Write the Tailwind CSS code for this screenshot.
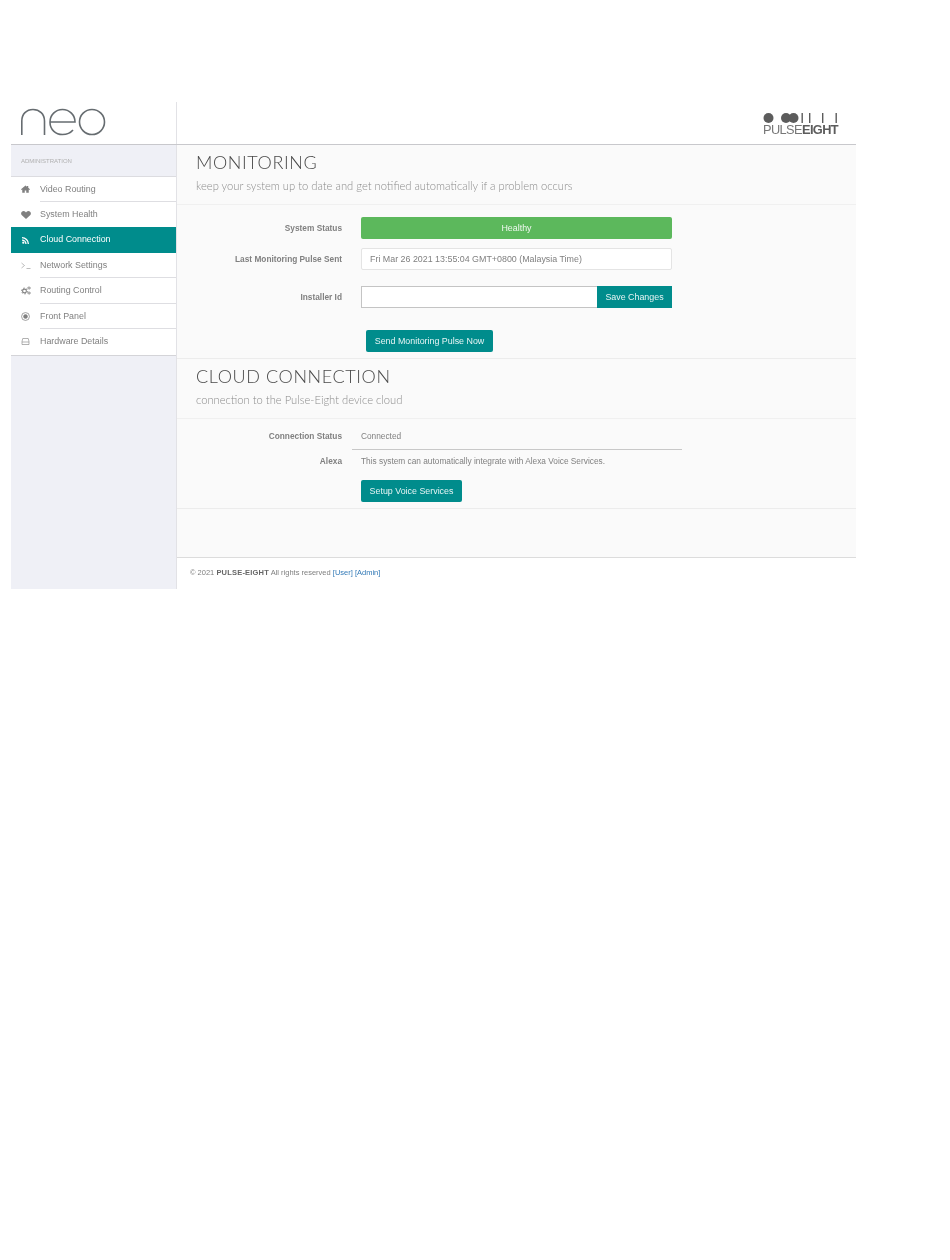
<!DOCTYPE html>
<html lang="en">
<head>
    <meta charset="UTF-8">
    <title>Neo - Cloud Connection</title>
    <script src="https://cdn.jsdelivr.net/npm/@tailwindcss/browser@4"></script>
</head>
<body class="bg-white font-['Liberation_Sans',sans-serif] text-[8.3px] text-[#808080]">
    <div class="ml-[11px] mt-[102px] w-[845px] h-[487px] flex flex-col will-change-transform">
        <!-- top bar -->
        <header class="flex h-[43px] shrink-0 border-b border-[#c8c8cc]">
            <div class="w-[166px] border-r border-[#e2e2e6] pl-[9px] pt-[6px]">
                <svg width="86" height="28" viewBox="0 0 86 28" fill="none" stroke="#666c70" stroke-width="1.6">
                    <path d="M1.800 27V13C1.800 6 6.500 1.500 13 1.500S24.500 6 24.500 13V27"/>
                    <path d="M30 14H55C55 7 49.500 1.500 42.500 1.500S30 7 30 14.200 35.500 26.500 42.500 26.500C47 26.500 50.500 25 53 22"/>
                    <circle cx="72" cy="14" r="12.500"/>
                </svg>
            </div>
            <div class="flex-1 flex justify-end pr-[18px] pt-[10px]">
                <div class="w-[75px] relative">
                    <svg width="75" height="12" viewBox="0 0 75 12" fill="#5c5c5c" class="block">
                        <circle cx="5.500" cy="6" r="5"/><circle cx="23" cy="6" r="5"/><circle cx="30.500" cy="6" r="5"/>
                        <rect x="38.500" y="1" width="1.400" height="10"/><rect x="46" y="1" width="1.400" height="10"/>
                        <rect x="59" y="1" width="1.400" height="10"/><rect x="72.500" y="1" width="1.400" height="10"/>
                    </svg>
                    <div class="text-[12.8px] leading-[11px] tracking-[-0.6px] text-[#777] whitespace-nowrap">PULSE<span class="font-bold text-[#5c5c5c]">EIGHT</span></div>
                </div>
            </div>
        </header>

        <div class="flex flex-1">
            <!-- sidebar -->
            <aside class="w-[166px] shrink-0 bg-[#eff0f6] border-r border-[#e2e2e6]">
                <div class="h-[31.600px] flex items-center pl-[10px] pt-[2px] text-[6px] text-[#b0b0b0] border-b border-[#dcdce0]">ADMINISTRATION</div>
                <nav class="bg-white border-b border-[#d4d4d8] text-[#808080] text-[8.900px]">
                    <a class="h-[25.400px] flex items-center relative">
                        <span class="w-[29px] flex justify-center">
                            <svg width="9" height="8" viewBox="0 0 18 16" fill="#808080"><path d="M9 1 0 8.500 1 10l1.500-1.200V15.500H7.500V11h3v4.500h5V8.800L17 10l1-1.500-3.500-3V2h-2.500v1.400z"/></svg>
                        </span>
                        Video Routing
                        <span class="absolute left-[29px] right-0 bottom-0 h-px bg-[#dedee2]"></span>
                    </a>
                    <a class="h-[25.400px] flex items-center">
                        <span class="w-[29px] flex justify-center">
                            <svg width="10" height="8" viewBox="0 0 16 13" fill="#808080"><path d="M8 13 1.300 7C-.4 5.300-.4 2.800 1.300 1.200S5.500-.2 7 1.400L8 2.500l1-1.100c1.500-1.600 4-1.800 5.700-.2s1.700 4.100 0 5.800z"/></svg>
                        </span>
                        System Health
                    </a>
                    <a class="h-[25.400px] flex items-center bg-[#008c8c] text-white">
                        <span class="w-[29px] flex justify-center">
                            <svg width="7" height="7" viewBox="0 0 16 16" fill="#fff"><circle cx="3" cy="13" r="2.600"/><path d="M0 5.500v3a7.500 7.500 0 0 1 7.500 7.500h3A10.500 10.500 0 0 0 0 5.500z"/><path d="M0 0v3a13 13 0 0 1 13 13h3A16 16 0 0 0 0 0z"/></svg>
                        </span>
                        Cloud Connection
                    </a>
                    <a class="h-[25.400px] flex items-center relative">
                        <span class="w-[29px] flex justify-center">
                            <svg width="10" height="7" viewBox="0 0 20 14" fill="none" stroke="#999" stroke-width="1.300"><path d="M1 2l6 5-6 5M11 13h8"/></svg>
                        </span>
                        Network Settings
                        <span class="absolute left-[29px] right-0 bottom-0 h-px bg-[#dedee2]"></span>
                    </a>
                    <a class="h-[25.400px] flex items-center relative">
                        <span class="w-[29px] flex justify-center">
                            <svg width="10" height="9" viewBox="0 0 20 18" fill="none" stroke="#808080">
                                <circle cx="7" cy="10" r="3.800" stroke-width="2.200"/>
                                <circle cx="7" cy="10" r="5.800" stroke-width="2" stroke-dasharray="3 3"/>
                                <circle cx="16" cy="4" r="1.600" stroke-width="1.500"/>
                                <circle cx="16" cy="4" r="3" stroke-width="1.200" stroke-dasharray="1.500 1.500"/>
                                <circle cx="16" cy="14" r="1.600" stroke-width="1.500"/>
                                <circle cx="16" cy="14" r="3" stroke-width="1.200" stroke-dasharray="1.500 1.500"/>
                            </svg>
                        </span>
                        Routing Control
                        <span class="absolute left-[29px] right-0 bottom-0 h-px bg-[#dedee2]"></span>
                    </a>
                    <a class="h-[25.400px] flex items-center relative">
                        <span class="w-[29px] flex justify-center">
                            <svg width="9" height="9" viewBox="0 0 16 16" fill="none" stroke="#808080"><circle cx="8" cy="8" r="7" stroke-width="1.300"/><circle cx="8" cy="8" r="3.500" fill="#808080"/></svg>
                        </span>
                        Front Panel
                        <span class="absolute left-[29px] right-0 bottom-0 h-px bg-[#dedee2]"></span>
                    </a>
                    <a class="h-[26px] flex items-center">
                        <span class="w-[29px] flex justify-center">
                            <svg width="9" height="7" viewBox="0 0 16 14" fill="none" stroke="#808080" stroke-width="1.200"><path d="M2.500 1h11L15 7v6H1V7zM1 8h14"/></svg>
                        </span>
                        Hardware Details
                    </a>
                </nav>
            </aside>

            <!-- main -->
            <main class="flex-1 bg-[#fafafa] flex flex-col">
                <section class="h-[214px] border-b border-[#ececec]">
                    <div class="h-[60px] border-b border-[#f0f0f0] pl-[19px] pt-[7px]">
                        <h1 class="font-['Lato'] font-light text-[18px] leading-[20px] tracking-[0.6px] text-[#4a4a4a]">MONITORING</h1>
                        <p class="font-['Lato'] font-light text-[11.200px] leading-[14px] mt-[7px] text-[#8c8c8c]">keep your system up to date and get notified automatically if a problem occurs</p>
                    </div>
                    <div class="grid grid-cols-[165px_311px] gap-x-[19px] pt-[12px]">
                        <div class="h-[22px] flex items-center justify-end font-bold">System Status</div>
                        <div class="h-[22px] pt-[2px] bg-[#5cb85c] rounded-[2px] text-white/90 flex items-center justify-center text-[8.900px]">Healthy</div>
                        <div class="h-[22px] mt-[9px] flex items-center justify-end font-bold">Last Monitoring Pulse Sent</div>
                        <div class="h-[22px] mt-[9px] pt-[1px] bg-white border border-[#e4e4e4] rounded-[2px] flex items-center pl-[8px] text-[8.900px]">Fri Mar 26 2021 13:55:04 GMT+0800 (Malaysia Time)</div>
                        <div class="h-[22px] mt-[16px] flex items-center justify-end font-bold">Installer Id</div>
                        <div class="h-[22px] mt-[16px] flex">
                            <input class="flex-1 min-w-0 bg-white border border-[#c4c4c4] border-r-0">
                            <button class="w-[75px] pt-[2px] bg-[#008c8c] text-white/90 text-[8.900px]">Save Changes</button>
                        </div>
                        <div></div>
                        <div class="pt-[22px] pl-[5px]">
                            <button class="h-[22px] w-[127px] pt-[2px] bg-[#008c8c] text-white/90 rounded-[2px] text-[8.900px]">Send Monitoring Pulse Now</button>
                        </div>
                    </div>
                </section>

                <section class="h-[150px] border-b border-[#ececec]">
                    <div class="h-[60px] border-b border-[#f0f0f0] pl-[19px] pt-[7px]">
                        <h1 class="font-['Lato'] font-light text-[18px] leading-[20px] tracking-[0.6px] text-[#4a4a4a]">CLOUD CONNECTION</h1>
                        <p class="font-['Lato'] font-light text-[11.200px] leading-[14px] mt-[7px] text-[#8c8c8c]">connection to the Pulse-Eight device cloud</p>
                    </div>
                    <div class="grid grid-cols-[165px_330px] gap-x-[10px]">
                        <div class="h-[31px] pt-[4px] flex items-center justify-end font-bold">Connection Status</div>
                        <div class="h-[31px] pt-[4px] flex items-center pl-[9px] border-b border-[#c8c8c8]">Connected</div>
                        <div class="h-[23px] flex items-center justify-end font-bold">Alexa</div>
                        <div class="h-[23px] flex items-center pl-[9px]">This system can automatically integrate with Alexa Voice Services.</div>
                        <div></div>
                        <div class="pl-[9px] pt-[7px]">
                            <button class="h-[22px] w-[101px] pt-[1px] bg-[#008c8c] text-white/90 rounded-[2px] text-[8.900px]">Setup Voice Services</button>
                        </div>
                    </div>
                </section>

                <div class="h-[49px] border-b border-[#dcdcdc]"></div>

                <footer class="flex-1 bg-white pl-[13px] pt-[9px] text-[7.500px]">
                    © 2021 <b class="tracking-[0.2px] text-[#666]">PULSE-EIGHT</b> All rights reserved <a class="text-[#337ab7]">[User]</a> <a class="text-[#337ab7]">[Admin]</a>
                </footer>
            </main>
        </div>
    </div>
</body>
</html>
